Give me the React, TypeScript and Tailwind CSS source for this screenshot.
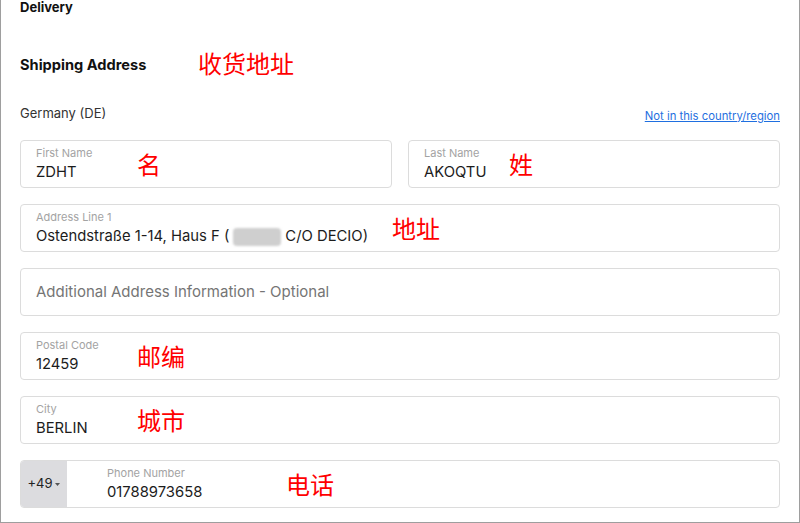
import React from "react";

const font = { fontFamily: "Inter, 'Noto Sans', 'Noto Sans CJK SC', sans-serif" };
const cjk = { fontFamily: "'Noto Sans CJK SC', sans-serif" };

function Note({ text, className }: { text: string; className: string }) {
  return (
    <span className={`absolute text-[24px] leading-[28px] text-[#ff0000] ${className}`} style={cjk}>
      {text}
    </span>
  );
}

function Field({
  label,
  value,
  note,
  noteClass,
}: {
  label: string;
  value: React.ReactNode;
  note?: string;
  noteClass?: string;
}) {
  return (
    <div className="relative h-[48px] rounded-[4px] border border-[#dcdcdc] bg-white px-[15px] pt-[5px]">
      <div className="text-[11px] leading-[14px] text-[#a3a3a3]">{label}</div>
      <div className="mt-[2px] text-[14.8px] leading-[21px] text-[#1c1c1c]">{value}</div>
      {note && <Note text={note} className={noteClass ?? ""} />}
    </div>
  );
}

export default function App() {
  return (
    <div
      className="h-[523px] w-[800px] overflow-hidden border-x border-b border-[#9e9e9e] bg-white px-[19px]"
      style={font}
    >
      <div className="text-[13px] font-bold leading-[14px] text-[#111]">Delivery</div>

      <div className="mt-[35px] flex items-start">
        <div className="mt-[6px] w-[178px] text-[14.6px] font-bold leading-[20px] text-[#111]">
          Shipping Address
        </div>
        <span className="text-[24px] leading-[28px] text-[#ff0000]" style={cjk}>
          收货地址
        </span>
      </div>

      <div className="mt-[28px] flex h-[18px] items-center justify-between">
        <span className="text-[13px] text-[#333]">Germany (DE)</span>
        <a href="#" className="mt-[4px] text-[11.3px] text-[#1f6fe0] underline">
          Not in this country/region
        </a>
      </div>

      <div className="mt-[17px] flex flex-col gap-[16px]">
        <div className="grid grid-cols-2 gap-[16px]">
          <Field label="First Name" value="ZDHT" note="名" noteClass="left-[116px] top-[9px]" />
          <Field label="Last Name" value="AKOQTU" note="姓" noteClass="left-[100px] top-[9px]" />
        </div>

        <Field
          label="Address Line 1"
          value={
            <span className="flex items-center">
              Ostendstraße 1-14, Haus F (
              <span className="ml-[4px] mr-[4px] inline-block h-[18px] w-[48px] rounded-[4px] bg-[#cfcfcf] blur-[1px]" />
              C/O DECIO)
            </span>
          }
          note="地址"
          noteClass="left-[371px] top-[9px]"
        />

        <div className="flex h-[48px] items-center rounded-[4px] border border-[#dcdcdc] px-[15px]">
          <span className="text-[15px] text-[#757575]">Additional Address Information - Optional</span>
        </div>

        <Field label="Postal Code" value="12459" note="邮编" noteClass="left-[116px] top-[9px]" />
        <Field label="City" value="BERLIN" note="城市" noteClass="left-[116px] top-[9px]" />

        <div className="relative flex h-[48px] overflow-hidden rounded-[4px] border border-[#dcdcdc]">
          <div className="flex w-[46px] items-center justify-center bg-[#dcdcdf] text-[13px] text-[#222]">
            +49
            <svg width="7" height="5" viewBox="0 0 7 5" className="ml-[1px]">
              <path d="M1 1h5L3.5 4z" fill="#555" />
            </svg>
          </div>
          <div className="pl-[40px] pt-[5px]">
            <div className="text-[11px] leading-[14px] text-[#a3a3a3]">Phone Number</div>
            <div className="mt-[2px] text-[14.8px] leading-[21px] text-[#1c1c1c]">01788973658</div>
          </div>
          <Note text="电话" className="left-[265px] top-[9px]" />
        </div>
      </div>
    </div>
  );
}
